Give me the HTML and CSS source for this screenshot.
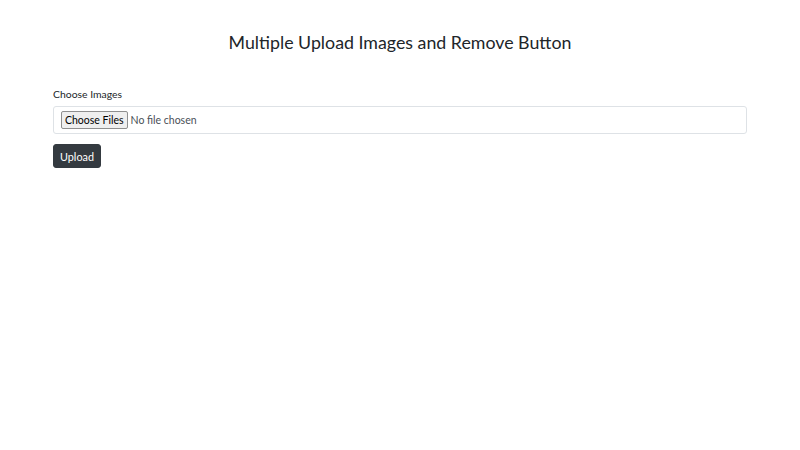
FILE: index.html
```html
<!DOCTYPE html>
<html lang="en">
<head>
<meta charset="utf-8">
<title>Multiple Upload Images and Remove Button</title>
<link rel="stylesheet" href="styles.css">
</head>
<body>
<div class="container">
  <h1 class="title">Multiple Upload Images and Remove Button</h1>
  <form class="upload-form">
    <label class="form-label" for="images">Choose Images</label>
    <div class="file-control">
      <span class="file-btn">Choose Files</span>
      <span class="file-text">No file chosen</span>
    </div>
    <button type="button" class="btn-dark">Upload</button>
  </form>
</div>
</body>
</html>
```

FILE: styles.css
```css
* { box-sizing: border-box; }
html, body {
  margin: 0;
  padding: 0;
  background: #fff;
  color: #212529;
  font-family: Lato, "Open Sans", "Liberation Sans", sans-serif;
}
.container {
  width: 694px;
  margin: 0 auto;
  padding-top: 30px;
}
.title {
  margin: 0;
  text-align: center;
  font-weight: 400;
  font-size: 17.8px;
  line-height: 24px;
  color: #212529;
}
.upload-form {
  margin-top: 30px;
  display: flex;
  flex-direction: column;
  align-items: flex-start;
}
.form-label {
  font-size: 10.4px;
  line-height: 20px;
  margin-bottom: 2px;
}
.file-control {
  width: 100%;
  height: 28px;
  border: 1px solid #dee2e6;
  border-radius: 3px;
  display: flex;
  align-items: center;
  padding-left: 7px;
  font-size: 10.5px;
}
.file-btn {
  background: #efefef;
  border: 1px solid #8f8f8f;
  border-radius: 2px;
  color: #000;
  padding: 0 3px;
  height: 18px;
  line-height: 16px;
}
.file-text {
  margin-left: 3px;
  color: #495057;
}
.btn-dark {
  margin-top: 10px;
  width: 48px;
  height: 24px;
  background: #343a40;
  color: #fff;
  border: 1px solid #343a40;
  border-radius: 3px;
  font-family: inherit;
  font-size: 10.8px;
  padding: 0;
}
```
